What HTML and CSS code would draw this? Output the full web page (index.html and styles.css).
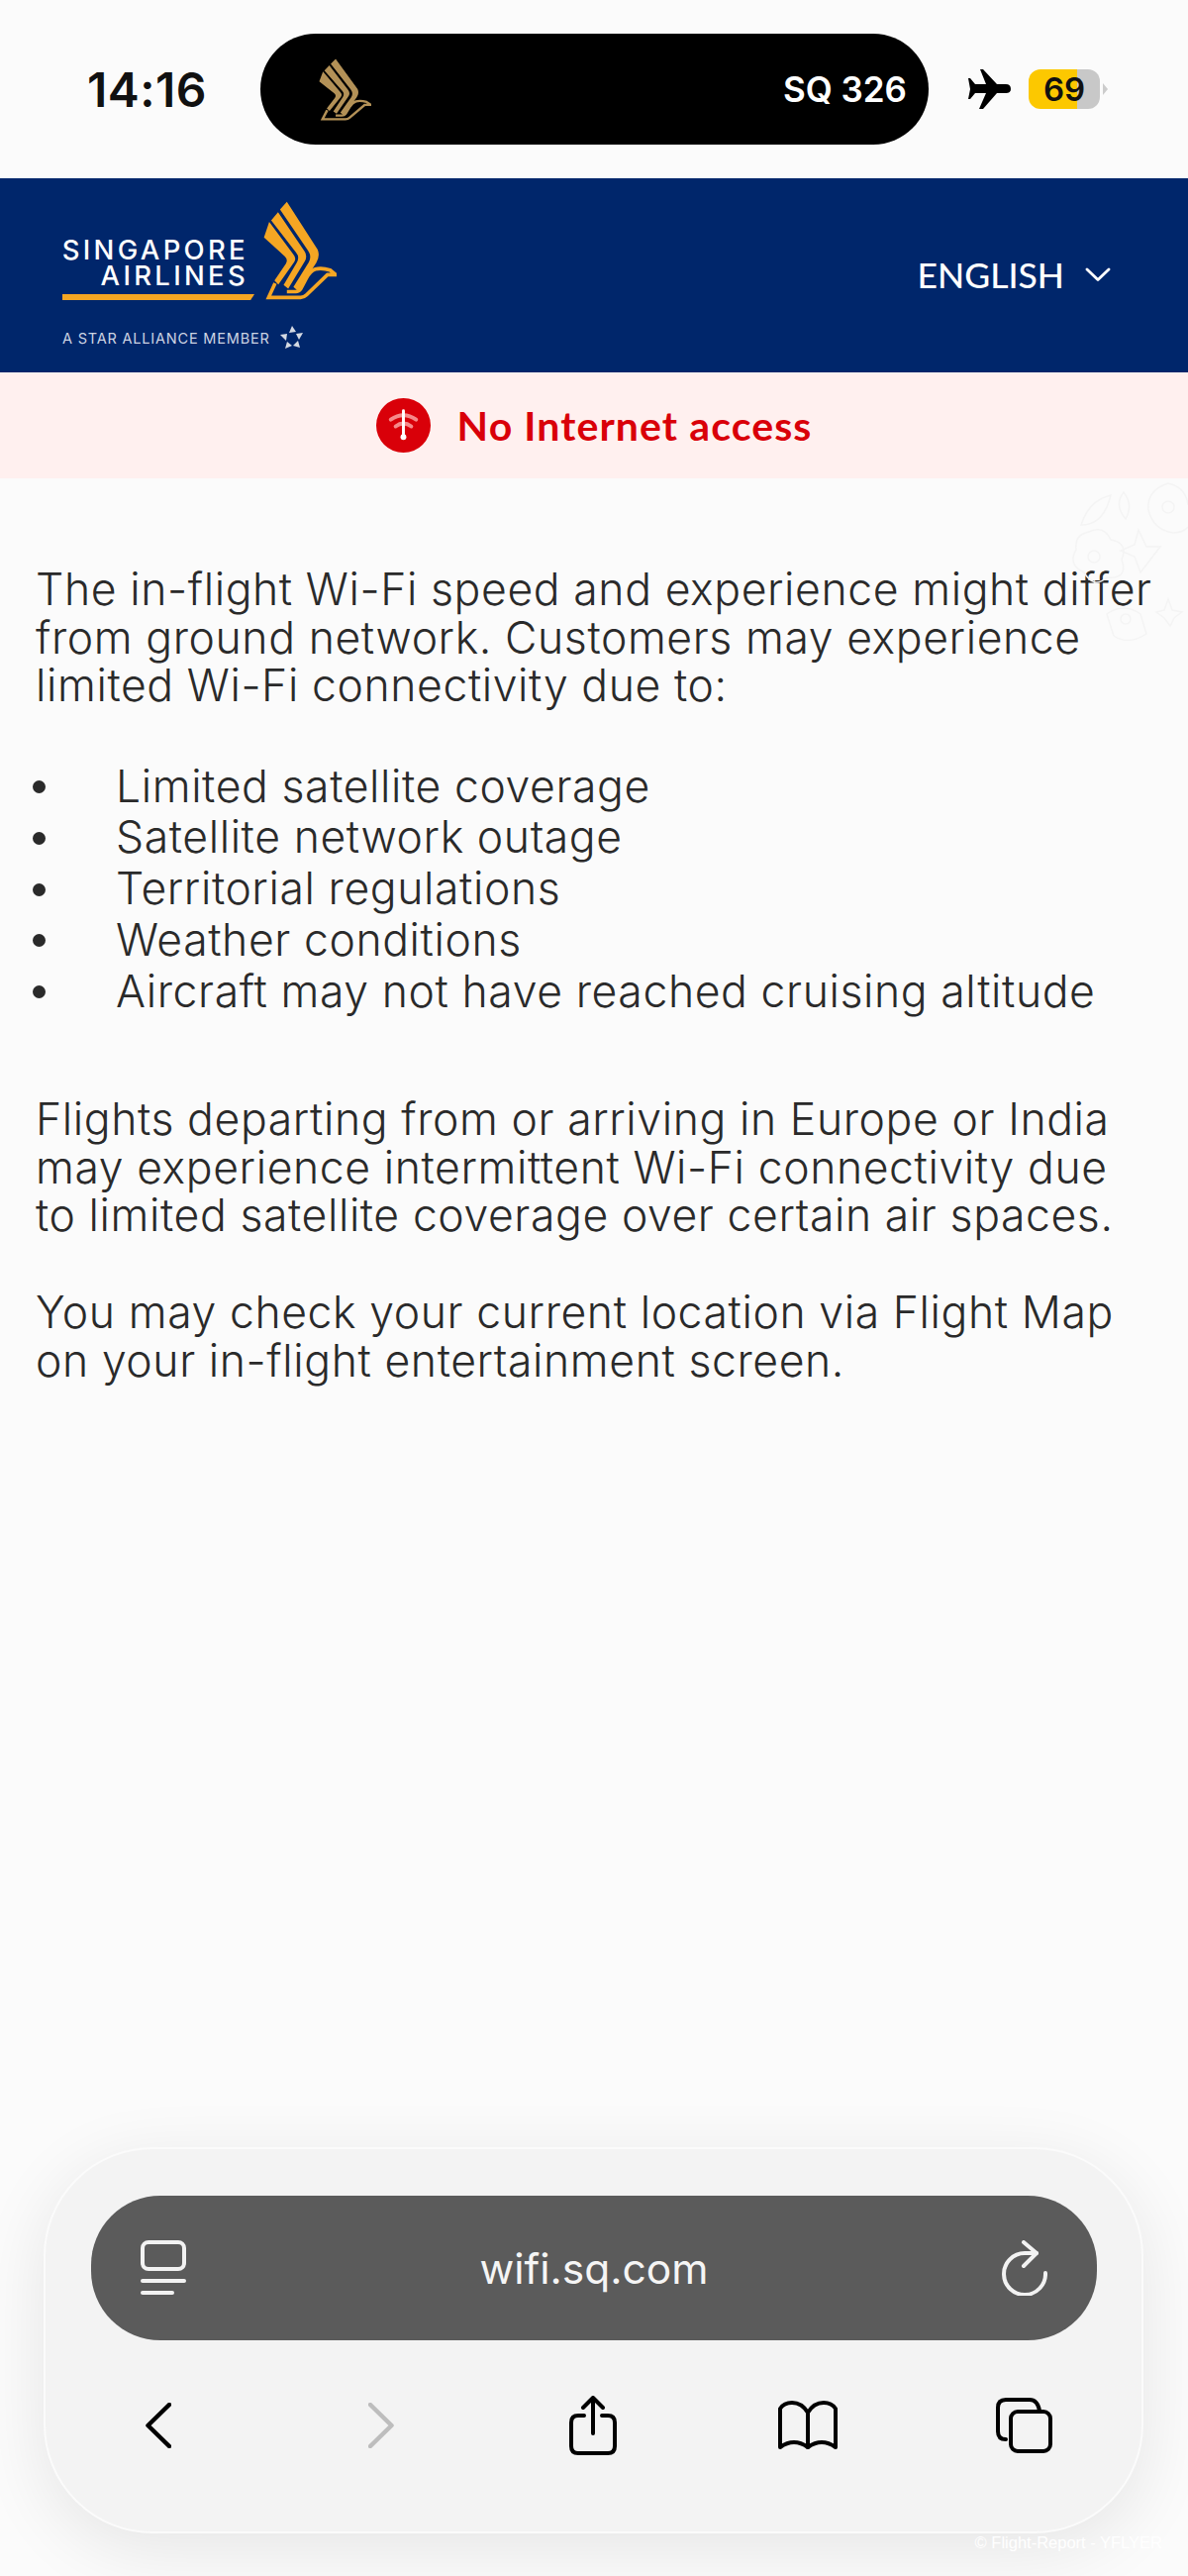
FILE: index.html
```html
<!DOCTYPE html>
<html lang="en">
<head>
  <meta charset="UTF-8" />
  <title>Singapore Airlines Wi-Fi</title>
  <link rel="stylesheet" href="styles.css">
</head>
<body>
  <svg class="defs" width="0" height="0">
    <symbol id="bird" viewBox="676 36 224 304" preserveAspectRatio="none">
      <path fill="currentColor" d="M748 38 L842 185 Q850 205 838 225 L782 312 L768 300 L815 224 Q825 205 812 187 L727 62 Z"/>
      <path fill="currentColor" d="M721 70 L802 190 Q812 206 802 222 L752 305 L738 294 L778 225 Q788 208 776 194 L700 95 Z"/>
      <path fill="currentColor" d="M694 100 L768 200 Q778 212 770 224 L722 292 L710 280 L745 228 Q752 216 742 206 L678 148 Z"/>
      <path fill="none" stroke="currentColor" stroke-width="11" d="M712 288 L692 332 H790 Q800 332 808 324 L872 262 L897 262 L880 248 Q855 240 835 245 Q820 250 808 272 L790 306 Q785 314 775 314 H748"/>
    </symbol>
  </svg>

  <div class="phone">
    <div class="status-bar">
      <span class="clock">14:16</span>
      <div class="island">
        <svg class="island-bird" width="53" height="63"><use href="#bird"/></svg>
        <span class="flight">SQ 326</span>
      </div>
      <div class="status-right">
        <svg class="plane" viewBox="0 0 44 40" width="44" height="40"><path d="M13 0 L16 0 L30 15 L39 15 Q44 15 44 20 Q44 24 39 24 L30 24 L16 40 L12 40 L19 24 L8 24 L3 30 L1 30 L3 20 L1 9 L3 9 L8 15 L19 15 Z" fill="#000"/></svg>
        <div class="battery">
          <div class="battery-body"><span class="battery-level">69</span></div>
          <span class="battery-tip"></span>
        </div>
      </div>
    </div>

    <header class="site-header">
      <div class="brand">
        <div class="brand-top">
          <div class="brand-name">
            <span class="brand-word">SINGAPORE</span>
            <span class="brand-word">AIRLINES</span>
            <span class="brand-rule"></span>
          </div>
          <svg class="brand-bird" width="74" height="100"><use href="#bird"/></svg>
        </div>
        <div class="alliance">
          <span>A STAR ALLIANCE MEMBER</span>
          <svg viewBox="0 0 24 24" width="24" height="24">
            <g fill="#d5dae3">
              <path d="M12 0 L16 6 L9 7 Z"/>
              <path d="M23 7 L19 14 L16 8 Z"/>
              <path d="M20 22 L13 20 L18 15 Z"/>
              <path d="M5 23 L7 16 L12 20 Z"/>
              <path d="M0 9 L7 8 L6 15 Z"/>
            </g>
          </svg>
        </div>
      </div>
      <div class="language">
        <span>ENGLISH</span>
        <svg viewBox="0 0 26 14" width="26" height="14"><path d="M2 2 L13 12.500 L24 2" fill="none" stroke="#fff" stroke-width="2.800" stroke-linecap="round" stroke-linejoin="round"/></svg>
      </div>
    </header>

    <div class="alert">
      <svg class="alert-icon" viewBox="0 0 56 56" width="55" height="55">
        <circle cx="28" cy="28" r="28" fill="#d90009"/>
        <path d="M15 22 Q28 13 41 22" fill="none" stroke="#f58a8a" stroke-width="4" stroke-linecap="round"/>
        <path d="M20 29 Q28 23 36 29" fill="none" stroke="#f58a8a" stroke-width="4" stroke-linecap="round"/>
        <path d="M28 13 L28 40" stroke="#fff" stroke-width="3" stroke-linecap="round"/>
        <circle cx="28" cy="40" r="3" fill="#fff"/>
      </svg>
      <span class="alert-text">No Internet access</span>
    </div>

    <main class="content">
      <svg class="floral" viewBox="1070 483 130 170" width="130" height="170">
        <g fill="none" stroke="#f4f4f4" stroke-width="1.500">
          <path d="M1122 500 Q1100 505 1092 530 Q1115 530 1122 500 Z"/>
          <path d="M1135 497 Q1125 510 1137 524 Q1145 510 1135 497 Z"/>
          <path d="M1180 488 Q1198 492 1200 510 M1180 488 Q1158 495 1160 515 Q1165 535 1185 538 Q1195 538 1200 532"/>
          <circle cx="1180" cy="512" r="6"/>
          <path d="M1100 537 Q1115 530 1122 545 Q1140 548 1133 565 Q1140 585 1118 583 Q1105 595 1095 578 Q1078 570 1087 555 Q1085 540 1100 537 Z"/>
          <circle cx="1105" cy="562" r="6"/>
          <path d="M1150 535 L1158 552 L1172 552 L1162 565 L1152 578 L1146 562 L1132 556 L1146 550 Z"/>
          <path d="M1118 620 Q1135 608 1152 620 L1158 640 Q1140 652 1125 642 Z"/>
          <circle cx="1137" cy="625" r="5"/>
          <path d="M1180 605 L1184 616 L1194 618 L1186 624 L1182 632 L1176 624 L1168 618 L1176 616 Z"/>
        </g>
      </svg>
      <p>The in-flight Wi-Fi speed and experience might differ from ground network. Customers may experience limited Wi-Fi connectivity due to:</p>
      <ul>
        <li>Limited satellite coverage</li>
        <li>Satellite network outage</li>
        <li>Territorial regulations</li>
        <li>Weather conditions</li>
        <li>Aircraft may not have reached cruising altitude</li>
      </ul>
      <p>Flights departing from or arriving in Europe or India may experience intermittent Wi-Fi connectivity due to limited satellite coverage over certain air spaces.</p>
      <p>You may check your current location via Flight Map on your in-flight entertainment screen.</p>
    </main>

    <div class="toolbar">
      <div class="address-bar">
        <svg viewBox="0 0 46 56" width="46" height="56" fill="none" stroke="#f2f2f2" stroke-width="4" stroke-linecap="round">
          <rect x="2" y="2" width="42" height="27" rx="6"/>
          <path d="M2 41 L44 41"/>
          <path d="M2 53 L32 53"/>
        </svg>
        <span class="url">wifi.sq.com</span>
        <svg viewBox="0 0 46 56" width="46" height="56" fill="none" stroke="#f2f2f2" stroke-width="4" stroke-linecap="round" stroke-linejoin="round">
          <path d="M44 33 A21 21 0 1 1 23 13 L35 13"/>
          <path d="M22 2 L35 13 L22 26"/>
        </svg>
      </div>
      <div class="toolbar-icons">
        <svg viewBox="0 0 26 46" width="26" height="46" fill="none" stroke="#000" stroke-width="4.500" stroke-linecap="round" stroke-linejoin="round"><path d="M24 2 L2.500 23 L24 44"/></svg>
        <svg viewBox="0 0 26 46" width="26" height="46" fill="none" stroke="#bdbdbd" stroke-width="4.500" stroke-linecap="round" stroke-linejoin="round"><path d="M2 2 L23.500 23 L2 44"/></svg>
        <svg viewBox="0 0 48 60" width="48" height="60" fill="none" stroke="#000" stroke-width="4" stroke-linecap="round" stroke-linejoin="round">
          <path d="M15 20 L9 20 Q2 20 2 27 L2 51 Q2 58 9 58 L39 58 Q46 58 46 51 L46 27 Q46 20 39 20 L33 20"/>
          <path d="M24 38 L24 3"/>
          <path d="M14 12 L24 2 L34 12"/>
        </svg>
        <svg viewBox="0 0 60 50" width="60" height="50" fill="none" stroke="#000" stroke-width="4" stroke-linecap="round" stroke-linejoin="round">
          <path d="M30 12 Q24 2 14 2 Q6 2 2 8 L2 47 Q16 37 30 47 Q44 37 58 47 L58 8 Q54 2 46 2 Q36 2 30 12 Z"/>
          <path d="M30 12 L30 47"/>
        </svg>
        <svg viewBox="0 0 57 56" width="57" height="56" fill="none" stroke="#000" stroke-width="4" stroke-linecap="round" stroke-linejoin="round">
          <path d="M10 42 Q2 42 2 34 L2 10 Q2 2 10 2 L34 2 Q42 2 44 13"/>
          <rect x="15" y="14" width="40" height="40" rx="7"/>
        </svg>
      </div>
    </div>

    <span class="credit">© Flight-Report - YFLYER</span>
  </div>
</body>
</html>
```

FILE: styles.css
```css
* {
  box-sizing: border-box;
}
html, body {
  margin: 0;
  padding: 0;
}
body {
  font-family: Lato, "Liberation Sans", sans-serif;
  background: #fbfbfb;
  color: #2a2a2a;
}
.defs {
  position: absolute;
}
.phone {
  position: relative;
  width: 1200px;
  height: 2601px;
  overflow: hidden;
  display: flex;
  flex-direction: column;
  background: #fbfbfb;
}

/* status bar */
.status-bar {
  height: 180px;
  display: flex;
  align-items: center;
  flex-shrink: 0;
  padding: 0 0 0 88px;
}
.clock {
  width: 175px;
  font-family: Inter, sans-serif;
  font-size: 48px;
  font-weight: 600;
  letter-spacing: 0.5px;
  color: #111;
}
.island {
  width: 675px;
  height: 112px;
  background: #000;
  border-radius: 56px;
  display: flex;
  align-items: center;
  justify-content: space-between;
  padding: 0 22px 0 59px;
  color: #b39157;
}
.flight {
  font-family: Inter, sans-serif;
  font-size: 35px;
  font-weight: 600;
  color: #fff;
}
.status-right {
  display: flex;
  align-items: center;
  margin-left: 39px;
  gap: 18px;
}
.battery {
  display: flex;
  align-items: center;
  gap: 3px;
}
.battery-body {
  width: 72px;
  height: 40px;
  border-radius: 12px;
  background: linear-gradient(to right, #fcc800 68%, #c8c8c8 68%);
  display: flex;
  align-items: center;
  justify-content: center;
}
.battery-level {
  font-family: Inter, sans-serif;
  font-size: 33px;
  font-weight: 600;
  color: #111;
}
.battery-tip {
  width: 0;
  height: 0;
  border-left: 5px solid #ccc;
  border-top: 6px solid transparent;
  border-bottom: 6px solid transparent;
}

/* airline header */
.site-header {
  height: 196px;
  flex-shrink: 0;
  background: #00266b;
  display: flex;
  align-items: center;
  justify-content: space-between;
  padding: 0 78px 0 63px;
}
.brand {
  color: #fff;
}
.brand-top {
  display: flex;
  align-items: flex-end;
  gap: 9px;
  color: #f5a623;
}
.brand-name {
  width: 194px;
  display: flex;
  flex-direction: column;
  align-items: flex-end;
}
.brand-word {
  font-family: Inter, sans-serif;
  font-size: 27.500px;
  line-height: 25.500px;
  font-weight: 500;
  letter-spacing: 3.300px;
  margin-right: 6px;
  color: #fff;
}
.brand-rule {
  width: 100%;
  height: 6px;
  margin-top: 6px;
  background: #f5a623;
  clip-path: polygon(0 0, 100% 0, 98% 100%, 0 100%);
}
.alliance {
  display: flex;
  align-items: center;
  gap: 10px;
  margin-top: 26px;
  font-family: Inter, sans-serif;
  font-size: 14.500px;
  letter-spacing: 0.800px;
  color: #cdd4e3;
}
.language {
  display: flex;
  align-items: center;
  gap: 21px;
  padding-bottom: 2px;
  color: #fff;
  font-size: 35.500px;
  font-weight: 500;
}

/* no internet banner */
.alert {
  height: 107px;
  flex-shrink: 0;
  background: #fff0ef;
  display: flex;
  align-items: center;
  justify-content: center;
  gap: 27px;
}
.alert-text {
  color: #d90009;
  font-size: 41px;
  font-weight: 700;
  letter-spacing: 1.100px;
}

/* copy */
.content {
  position: relative;
  flex: 1;
  padding: 88px 34px 0 36px;
  font-family: Inter, sans-serif;
  font-weight: 300;
  font-size: 44.500px;
  letter-spacing: 0.600px;
  line-height: 48.600px;
}
.content p {
  margin: 0 0 49px;
}
.content ul {
  list-style: none;
  margin: 52px 0 79px -3px;
  padding: 0;
  line-height: 51.700px;
}
.content li {
  display: flex;
  align-items: center;
}
.content li::before {
  content: "";
  width: 13px;
  height: 13px;
  margin-right: 71px;
  border-radius: 50%;
  background: #2a2a2a;
}
.floral {
  position: absolute;
  top: 0;
  right: 0;
}

/* safari toolbar */
.toolbar {
  position: absolute;
  left: 44px;
  top: 2168px;
  width: 1111px;
  height: 390px;
  background: #f3f3f3;
  border: 2px solid #fbfbfb;
  border-radius: 110px;
  box-shadow: 0 16px 70px rgba(0, 0, 0, 0.09);
  padding: 47px 45px 0 46px;
}
.address-bar {
  height: 146px;
  background: #5b5b5b;
  border-radius: 70px;
  display: flex;
  align-items: center;
  justify-content: space-between;
  padding: 0 50px;
}
.url {
  color: #f5f5f5;
  font-family: Inter, sans-serif;
  font-size: 42.500px;
}
.toolbar-icons {
  display: grid;
  grid-template-columns: 228px 222px 206px 228px 208px;
  justify-items: center;
  align-items: center;
  height: 60px;
  margin: 56px 0 0 -46px;
}
.credit {
  position: absolute;
  right: 26px;
  top: 2558px;
  font-family: "Liberation Sans", sans-serif;
  font-size: 16.500px;
  color: #fff;
}
```
